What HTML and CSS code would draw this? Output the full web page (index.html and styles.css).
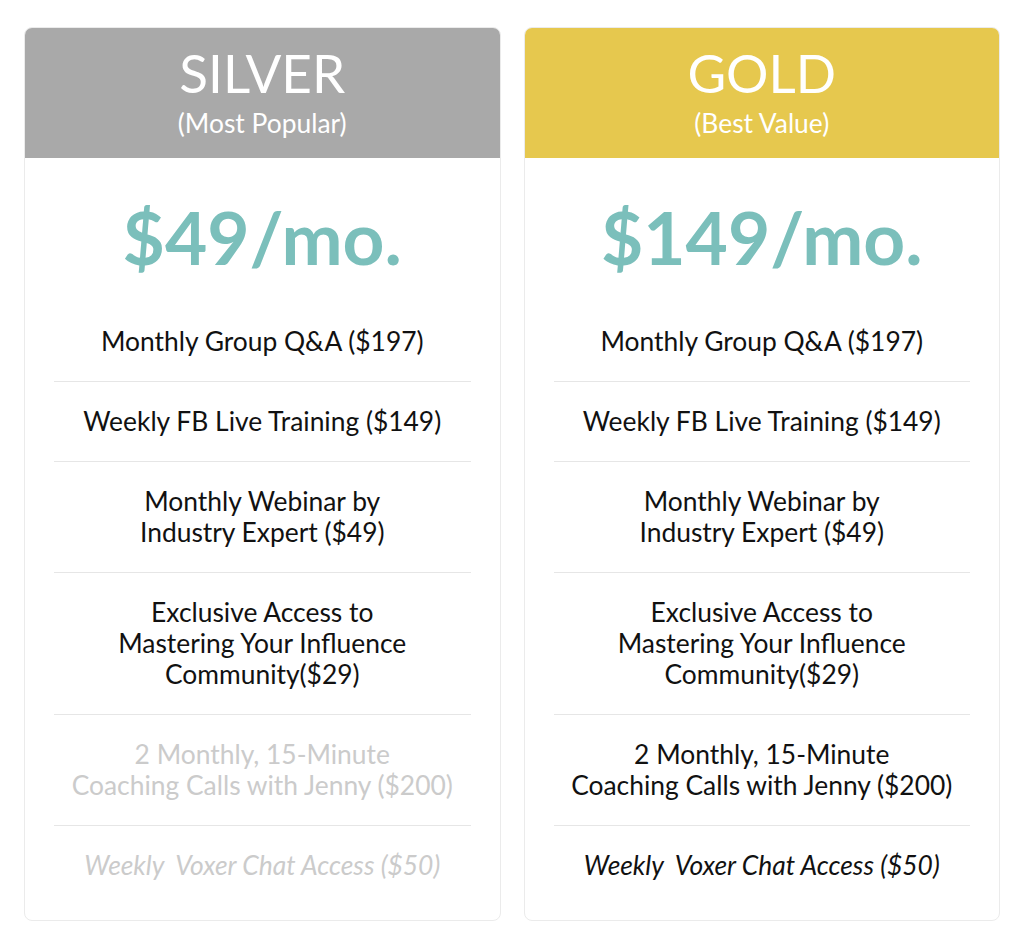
FILE: index.html
```html
<!DOCTYPE html>
<html lang="en">
<head>
<meta charset="utf-8">
<title>Pricing</title>
<link rel="stylesheet" href="styles.css">
</head>
<body>
<div class="plans">
  <section class="card card--silver">
    <header class="card__head">
      <h2 class="card__title">SILVER</h2>
      <p class="card__sub">(Most Popular)</p>
    </header>
    <div class="card__price">$49/mo.</div>
    <ul class="features">
      <li class="feature">Monthly Group Q&amp;A ($197)</li>
      <li class="feature">Weekly FB Live Training ($149)</li>
      <li class="feature">Monthly Webinar by<br>Industry Expert ($49)</li>
      <li class="feature">Exclusive Access to<br>Mastering Your Influence<br>Community($29)</li>
      <li class="feature feature--off">2 Monthly, 15-Minute<br>Coaching Calls with Jenny ($200)</li>
      <li class="feature feature--off feature--em">Weekly&nbsp; Voxer Chat Access ($50)</li>
    </ul>
  </section>
  <section class="card card--gold">
    <header class="card__head">
      <h2 class="card__title">GOLD</h2>
      <p class="card__sub">(Best Value)</p>
    </header>
    <div class="card__price">$149/mo.</div>
    <ul class="features">
      <li class="feature">Monthly Group Q&amp;A ($197)</li>
      <li class="feature">Weekly FB Live Training ($149)</li>
      <li class="feature">Monthly Webinar by<br>Industry Expert ($49)</li>
      <li class="feature">Exclusive Access to<br>Mastering Your Influence<br>Community($29)</li>
      <li class="feature">2 Monthly, 15-Minute<br>Coaching Calls with Jenny ($200)</li>
      <li class="feature feature--em">Weekly&nbsp; Voxer Chat Access ($50)</li>
    </ul>
  </section>
</div>
</body>
</html>
```

FILE: styles.css
```css
* { box-sizing: border-box; }
html, body { margin: 0; padding: 0; background: #fff; }
body {
  font-family: Lato, "Open Sans", "Liberation Sans", sans-serif;
  color: #111;
}
.plans {
  display: flex;
  gap: 23px;
  padding: 27px 24px 0;
}
.card {
  flex: 1 1 0;
  border: 1px solid #ebebeb;
  border-radius: 8px;
  overflow: hidden;
  padding-bottom: 15px;
  text-align: center;
}
.card__head {
  padding: 15px 10px 18px;
  color: #fff;
  margin: -1px -1px 0;
}
.card--silver .card__head { background: #a9a9a9; }
.card--gold .card__head { background: #e6c84e; }
.card__title {
  margin: 0;
  font-weight: 400;
  font-size: 53px;
  line-height: 62px;
}
.card__sub {
  margin: 4px 0 0;
  font-size: 26.4px;
  line-height: 31.5px;
}
.card__price {
  padding: 35px 0 21px;
  font-size: 73px;
  line-height: 88px;
  font-weight: 700;
  color: #7bbfbb;
}
.features {
  list-style: none;
  margin: 0 29px;
  padding: 0;
}
.feature {
  font-size: 26.4px;
  line-height: 31px;
  padding: 24px 0;
  border-top: 1px solid #e6e6e6;
}
.feature:first-child { border-top: 0; }
.feature--off { color: #cbcbcb; }
.feature--em { font-style: italic; }
```
